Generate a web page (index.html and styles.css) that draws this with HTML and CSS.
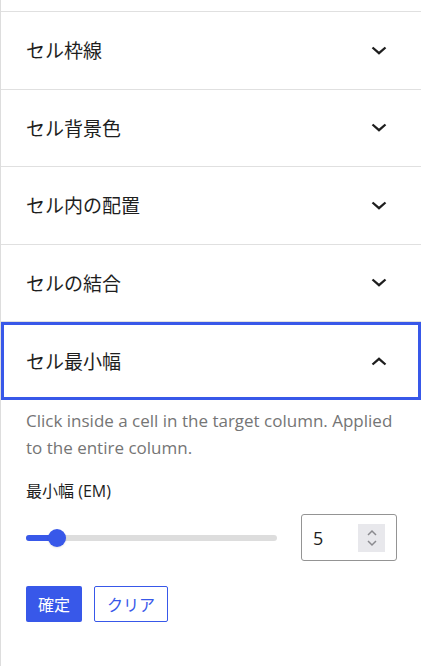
FILE: index.html
```html
<!DOCTYPE html>
<html lang="ja">
<head>
  <meta charset="UTF-8">
  <meta name="viewport" content="width=device-width, initial-scale=1.0">
  <title>セル設定</title>
  <link rel="stylesheet" href="styles.css">
</head>
<body>
  <div class="sidebar">
    <div class="panel">
      <button class="panel-toggle">
        <span>セル枠線</span>
        <svg class="chevron" viewBox="0 0 16 9"><polyline points="1.5,1.5 8,7.2 14.5,1.5"/></svg>
      </button>
    </div>
    <div class="panel">
      <button class="panel-toggle">
        <span>セル背景色</span>
        <svg class="chevron" viewBox="0 0 16 9"><polyline points="1.5,1.5 8,7.2 14.5,1.5"/></svg>
      </button>
    </div>
    <div class="panel">
      <button class="panel-toggle">
        <span>セル内の配置</span>
        <svg class="chevron" viewBox="0 0 16 9"><polyline points="1.5,1.5 8,7.2 14.5,1.5"/></svg>
      </button>
    </div>
    <div class="panel">
      <button class="panel-toggle">
        <span>セルの結合</span>
        <svg class="chevron" viewBox="0 0 16 9"><polyline points="1.5,1.5 8,7.2 14.5,1.5"/></svg>
      </button>
    </div>
    <div class="panel is-opened">
      <button class="panel-toggle is-focused">
        <span>セル最小幅</span>
        <svg class="chevron" viewBox="0 0 16 9"><polyline points="1.5,7.5 8,1.8 14.5,7.5"/></svg>
      </button>
      <div class="panel-body">
        <p class="help">Click inside a cell in the target column. Applied to the entire column.</p>
        <div class="field-label">最小幅 (EM)</div>
        <div class="range-row">
          <div class="range">
            <div class="range-rail">
              <div class="range-fill" style="width: 31px"></div>
            </div>
            <div class="range-thumb" style="left: 22px"></div>
          </div>
          <div class="number-input">
            <input type="text" value="5">
            <span class="spin">
              <svg viewBox="0 0 12 20"><polyline points="2,7 6,3 10,7"/><polyline points="2,13 6,17 10,13"/></svg>
            </span>
          </div>
        </div>
        <div class="actions">
          <button class="btn btn-primary">確定</button>
          <button class="btn btn-secondary">クリア</button>
        </div>
      </div>
    </div>
  </div>
</body>
</html>
```

FILE: styles.css
```css
body {
  margin: 0;
  background: #fff;
  font-family: "Open Sans", "Noto Sans CJK JP", sans-serif;
  color: #1e1e1e;
}

.sidebar {
  border-left: 1px solid #dddddd;
  min-height: 666px;
  padding-top: 11px;
  box-sizing: border-box;
}

.panel {
  border-top: 1px solid #e0e0e0;
}

.panel-toggle {
  display: flex;
  align-items: center;
  justify-content: space-between;
  width: 100%;
  height: 76.5px;
  padding: 0 34px 0 25px;
  border: none;
  background: #fff;
  font-family: inherit;
  font-size: 19px;
  color: #1e1e1e;
  box-sizing: border-box;
  cursor: pointer;
}

.panel-toggle.is-focused {
  box-shadow: inset 0 0 0 3px #3858e9;
  height: 78px;
}

.chevron {
  width: 16px;
  height: 9px;
  fill: none;
  stroke: #1e1e1e;
  stroke-width: 2.3;
}

.panel-body {
  padding: 7px 24px 40px 25px;
}

.help {
  margin: 0;
  font-size: 17px;
  line-height: 27px;
  color: #757575;
}

.field-label {
  margin-top: 20px;
  font-size: 16px;
  line-height: 20px;
}

.range-row {
  display: flex;
  align-items: center;
  gap: 24px;
  margin-top: 13px;
}

.range {
  position: relative;
  flex: 1;
  height: 18px;
  display: flex;
  align-items: center;
}

.range-rail {
  width: 100%;
  height: 6px;
  border-radius: 3px;
  background: #dddddd;
}

.range-fill {
  height: 100%;
  border-radius: 3px;
  background: #3858e9;
}

.range-thumb {
  position: absolute;
  top: 0;
  width: 18px;
  height: 18px;
  border-radius: 50%;
  background: #3858e9;
  box-shadow: 0 1px 2px rgba(0, 0, 0, 0.1);
}

.number-input {
  display: flex;
  align-items: center;
  width: 96px;
  height: 47px;
  border: 1px solid #949494;
  border-radius: 3px;
  box-sizing: border-box;
  padding: 0 11px 0 11px;
}

.number-input input {
  width: 40px;
  border: none;
  outline: none;
  padding: 0;
  font-family: inherit;
  font-size: 18px;
  color: #1e1e1e;
  flex: 1;
}

.spin {
  display: flex;
  align-items: center;
  justify-content: center;
  width: 27px;
  height: 28px;
  background: #e8e8ec;
}

.spin svg {
  width: 12px;
  height: 20px;
  fill: none;
  stroke: #8a8a8f;
  stroke-width: 1.5;
}

.actions {
  display: flex;
  gap: 12px;
  margin-top: 25px;
}

.btn {
  height: 36px;
  border-radius: 2px;
  font-family: inherit;
  font-size: 16px;
  cursor: pointer;
  box-sizing: border-box;
}

.btn-primary {
  padding: 0 12px;
  border: none;
  background: #3858e9;
  color: #fff;
}

.btn-secondary {
  padding: 0 12px;
  border: 1.5px solid #3858e9;
  background: #fff;
  color: #3858e9;
}
```
